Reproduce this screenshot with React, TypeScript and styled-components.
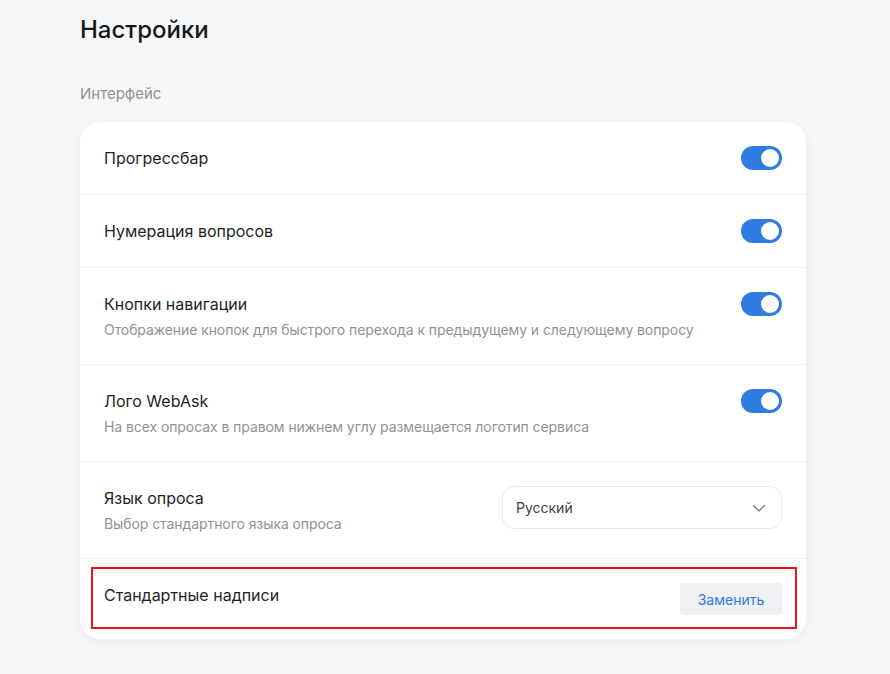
import React from "react";
import styled, { createGlobalStyle } from "styled-components";

const Global = createGlobalStyle`
  html, body { margin: 0; padding: 0; background: #f6f7f9; }
  body { font-family: Inter, "Noto Sans", sans-serif; color: #1d1f23; }
  * { box-sizing: border-box; }
`;

const Page = styled.div`
  padding: 14px 84px 36px 80px;
  min-height: 674px;
`;

const Title = styled.h1`
  margin: 0;
  font-size: 24px;
  line-height: 32px;
  font-weight: 500;
  color: #15171a;
`;

const Section = styled.div`
  margin-top: 36px;
  font-size: 15px;
  line-height: 24px;
  color: #8c939b;
`;

const Card = styled.div`
  margin-top: 16px;
  background: #fff;
  border-radius: 20px;
  box-shadow: 0 2px 10px rgba(30, 40, 60, 0.06);
  overflow: hidden;
`;

const Row = styled.div<{ $last?: boolean }>`
  display: flex;
  align-items: center;
  justify-content: space-between;
  gap: 24px;
  padding: 24px;
  border-bottom: ${(p) => (p.$last ? "none" : "1px solid #eff1f3")};
`;

const TopRow = styled(Row)`
  align-items: flex-start;
`;

const HighlightRow = styled.div`
  padding: 8px 9px 10px 11px;
`;

const Highlight = styled.div`
  border: 2px solid #e8141b;
  display: flex;
  align-items: flex-start;
  justify-content: space-between;
  padding: 14px 13px 12px 11px;
`;

const Texts = styled.div`
  display: flex;
  flex-direction: column;
  gap: 4px;
`;

const Label = styled.div`
  font-size: 16px;
  line-height: 24px;
  color: #1d1f23;
`;

const Desc = styled.div`
  font-size: 14px;
  line-height: 20px;
  letter-spacing: -0.08px;
  color: #8c939b;
`;

const Toggle = styled.div<{ $on: boolean }>`
  width: 41px;
  height: 24px;
  border-radius: 12px;
  background: ${(p) => (p.$on ? "#2f7ce3" : "#d5d9de")};
  position: relative;
  flex-shrink: 0;
  &::after {
    content: "";
    position: absolute;
    top: 3px;
    left: ${(p) => (p.$on ? "20px" : "3px")};
    width: 18px;
    height: 18px;
    border-radius: 50%;
    background: #fff;
  }
`;

const Select = styled.div`
  width: 280px;
  height: 43px;
  border: 1px solid #e8eaed;
  border-radius: 12px;
  display: flex;
  align-items: center;
  justify-content: space-between;
  padding: 0 14px 0 13px;
  font-size: 14px;
  color: #3a3d42;
  flex-shrink: 0;
`;

const Button = styled.button`
  font-family: inherit;
  width: 102px;
  height: 32px;
  border: none;
  border-radius: 4px;
  background: #eef0f3;
  color: #2a7ae2;
  font-size: 14px;
  cursor: pointer;
`;

const Chevron = () => (
  <svg width="16" height="16" viewBox="0 0 16 16" fill="none">
    <path d="M2.5 5.5 8 11l5.5-5.5" stroke="#7d838b" strokeWidth="1.4" strokeLinecap="round" strokeLinejoin="round" />
  </svg>
);

export default function App() {
  return (
    <>
      <Global />
      <Page>
        <Title>Настройки</Title>
        <Section>Интерфейс</Section>
        <Card>
          <Row>
            <Label>Прогрессбар</Label>
            <Toggle $on />
          </Row>
          <Row>
            <Label>Нумерация вопросов</Label>
            <Toggle $on />
          </Row>
          <TopRow>
            <Texts>
              <Label>Кнопки навигации</Label>
              <Desc>Отображение кнопок для быстрого перехода к предыдущему и следующему вопросу</Desc>
            </Texts>
            <Toggle $on />
          </TopRow>
          <TopRow>
            <Texts>
              <Label>Лого WebAsk</Label>
              <Desc>На всех опросах в правом нижнем углу размещается логотип сервиса</Desc>
            </Texts>
            <Toggle $on />
          </TopRow>
          <TopRow>
            <Texts>
              <Label>Язык опроса</Label>
              <Desc>Выбор стандартного языка опроса</Desc>
            </Texts>
            <Select>
              <span>Русский</span>
              <Chevron />
            </Select>
          </TopRow>
          <HighlightRow>
            <Highlight>
              <Label>Стандартные надписи</Label>
              <Button>Заменить</Button>
            </Highlight>
          </HighlightRow>
        </Card>
      </Page>
    </>
  );
}
